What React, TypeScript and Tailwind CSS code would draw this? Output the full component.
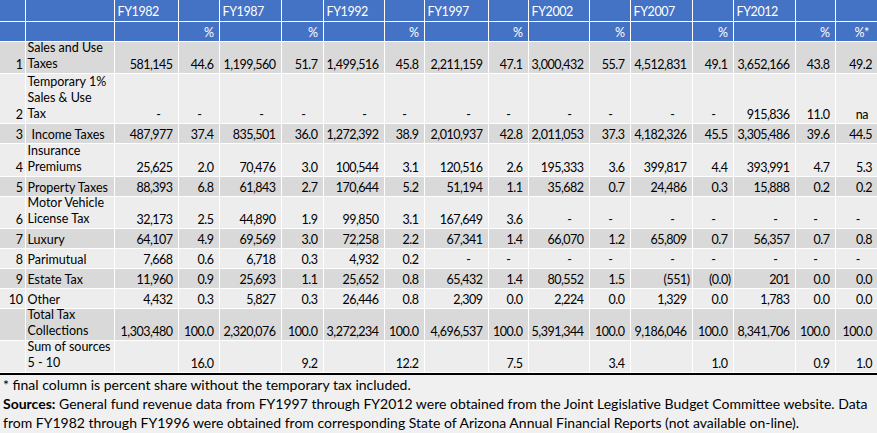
const years = ["FY1982", "FY1987", "FY1992", "FY1997", "FY2002", "FY2007", "FY2012"];

type Row = { n: string; label: string[]; vals: string[]; h: string; dark: boolean; indent?: boolean };

const rows: Row[] = [
  { n: "1", label: ["Sales and Use", "Taxes"], h: "h-[32px]", dark: true,
    vals: ["581,145", "44.6", "1,199,560", "51.7", "1,499,516", "45.8", "2,211,159", "47.1", "3,000,432", "55.7", "4,512,831", "49.1", "3,652,166", "43.8", "49.2"] },
  { n: "2", label: ["Temporary 1%", "Sales & Use", "Tax"], h: "h-[50px]", dark: false,
    vals: ["-", "-", "-", "-", "-", "-", "-", "-", "-", "-", "-", "-", "915,836", "11.0", "na"] },
  { n: "3", label: ["Income Taxes"], h: "h-[20px]", dark: true, indent: true,
    vals: ["487,977", "37.4", "835,501", "36.0", "1,272,392", "38.9", "2,010,937", "42.8", "2,011,053", "37.3", "4,182,326", "45.5", "3,305,486", "39.6", "44.5"] },
  { n: "4", label: ["Insurance", "Premiums"], h: "h-[33px]", dark: false,
    vals: ["25,625", "2.0", "70,476", "3.0", "100,544", "3.1", "120,516", "2.6", "195,333", "3.6", "399,817", "4.4", "393,991", "4.7", "5.3"] },
  { n: "5", label: ["Property Taxes"], h: "h-[20px]", dark: true,
    vals: ["88,393", "6.8", "61,843", "2.7", "170,644", "5.2", "51,194", "1.1", "35,682", "0.7", "24,486", "0.3", "15,888", "0.2", "0.2"] },
  { n: "6", label: ["Motor Vehicle", "License Tax"], h: "h-[32px]", dark: false,
    vals: ["32,173", "2.5", "44,890", "1.9", "99,850", "3.1", "167,649", "3.6", "-", "-", "-", "-", "-", "-", "-"] },
  { n: "7", label: ["Luxury"], h: "h-[20px]", dark: true,
    vals: ["64,107", "4.9", "69,569", "3.0", "72,258", "2.2", "67,341", "1.4", "66,070", "1.2", "65,809", "0.7", "56,357", "0.7", "0.8"] },
  { n: "8", label: ["Parimutual"], h: "h-[20px]", dark: false,
    vals: ["7,668", "0.6", "6,718", "0.3", "4,932", "0.2", "-", "-", "-", "-", "-", "-", "-", "-", "-"] },
  { n: "9", label: ["Estate Tax"], h: "h-[20px]", dark: true,
    vals: ["11,960", "0.9", "25,693", "1.1", "25,652", "0.8", "65,432", "1.4", "80,552", "1.5", "(551)", "(0.0)", "201", "0.0", "0.0"] },
  { n: "10", label: ["Other"], h: "h-[20px]", dark: false,
    vals: ["4,432", "0.3", "5,827", "0.3", "26,446", "0.8", "2,309", "0.0", "2,224", "0.0", "1,329", "0.0", "1,783", "0.0", "0.0"] },
  { n: "", label: ["Total Tax", "Collections"], h: "h-[32px]", dark: true,
    vals: ["1,303,480", "100.0", "2,320,076", "100.0", "3,272,234", "100.0", "4,696,537", "100.0", "5,391,344", "100.0", "9,186,046", "100.0", "8,341,706", "100.0", "100.0"] },
  { n: "", label: ["Sum of sources", "5 - 10"], h: "h-[32px]", dark: false,
    vals: ["", "16.0", "", "9.2", "", "12.2", "", "7.5", "", "3.4", "", "1.0", "", "0.9", "1.0"] },
];

const widths = ["w-[25px]", "w-[89px]", "w-[64px]", "w-[41px]", "w-[62px]", "w-[42px]", "w-[61px]", "w-[40px]", "w-[64px]", "w-[40px]", "w-[61px]", "w-[41px]", "w-[62px]", "w-[41px]", "w-[62px]", "w-[40px]", "w-[42px]"];

function valueClass(v: string) {
  if (v === "-") return "pr-[17px]";
  if (v === "na") return "pr-[9px]";
  if (v.startsWith("(")) return "pr-[2px]";
  return "pr-[5px]";
}

const cell = "border-r border-b border-white";

export default function App() {
  return (
    <div className="w-[877px] h-[433px] overflow-hidden bg-[#f0f0f0] text-black font-['Lato',sans-serif]">
      <table className="table-fixed border-collapse w-[877px]">
        <colgroup>
          {widths.map((w, i) => (
            <col key={i} className={w} />
          ))}
        </colgroup>
        <thead className="bg-[#4472c4] text-white text-[12.5px] tracking-[-0.4px] leading-[15px]">
          <tr className="h-[21px]">
            <th className={cell} />
            <th className={cell} />
            {years.flatMap((y) => [
              <th key={y} className={`${cell} text-left font-normal align-bottom pl-[3px] pb-[2px]`}>
                {y}
              </th>,
              <th key={y + "p"} className={cell} />,
            ])}
            <th className="border-b border-white" />
          </tr>
          <tr className="h-[20px]">
            <th className={cell} />
            <th className={cell} />
            {years.flatMap((y) => [
              <th key={y} className={cell} />,
              <th key={y + "p"} className={`${cell} text-right font-normal align-bottom pr-[5px] pb-[1px]`}>
                %
              </th>,
            ])}
            <th className="border-b border-white text-right font-normal align-bottom pr-[8px] pb-[1px]">%*</th>
          </tr>
        </thead>
        <tbody className="leading-[15px]">
          {rows.map((r, ri) => (
            <tr key={ri} className={`${r.h} ${r.dark ? "bg-[#d9d9d9]" : "bg-[#ededed]"}`}>
              <td className={`${cell} text-right align-bottom pr-[2px] pb-[1px] text-[12.5px] tracking-[-0.4px]`}>{r.n}</td>
              <td
                className={`${cell} align-bottom pb-[1px] whitespace-nowrap text-[12.5px] ${r.indent ? "pl-[6px]" : "pl-[2px]"}`}
              >
                <div className={r.label.length > 1 ? "-mt-[2px] leading-[16px]" : ""}>
                  {r.label.map((l, li) => (
                    <div key={li}>{l}</div>
                  ))}
                </div>
              </td>
              {r.vals.map((v, vi) => (
                <td
                  key={vi}
                  className={`border-b border-white text-right align-bottom pb-[1px] whitespace-nowrap text-[12.5px] tracking-[-0.5px] ${vi < 14 ? "border-r" : ""} ${valueClass(v)}`}
                >
                  {v}
                </td>
              ))}
            </tr>
          ))}
        </tbody>
      </table>
      <div className="border-t-2 border-black pl-[3px] leading-[19px] text-[14px] whitespace-nowrap">
        <p>* final column is percent share without the temporary tax included.</p>
        <p>
          <span className="font-bold">Sources:</span> General fund revenue data from FY1997 through FY2012 were obtained from the Joint Legislative Budget Committee website. Data
          <br />
          from FY1982 through FY1996 were obtained from corresponding State of Arizona Annual Financial Reports (not available on-line).
        </p>
      </div>
    </div>
  );
}
